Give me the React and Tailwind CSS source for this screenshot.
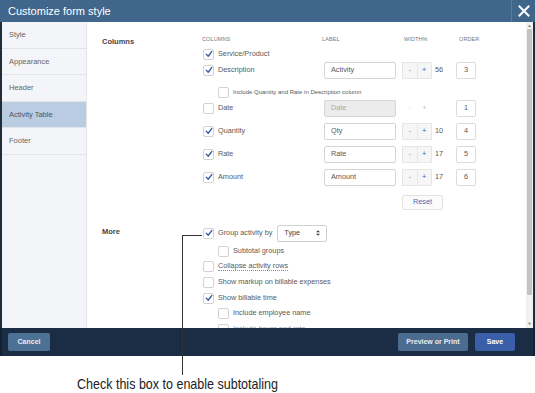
import React from 'react'

const Check = ({ checked, className = '' }) => (
  <span className={`flex h-[11px] w-[11px] shrink-0 items-center justify-center rounded-[2px] border border-[#d2d2d2] bg-white ${className}`}>
    {checked && (
      <svg viewBox="0 0 10 10" className="h-[8px] w-[8px]">
        <path d="M1.5 5.2 L4 7.8 L8.6 1.8" fill="none" stroke="#2f55a4" strokeWidth="1.6" strokeLinecap="round" strokeLinejoin="round" />
      </svg>
    )}
  </span>
)

const sideItems = ['Style', 'Appearance', 'Header', 'Activity Table', 'Footer']

const rows = [
  { name: 'Description', checked: true, label: 'Activity', width: '56', order: '3', mt: 'mt-0' },
  null,
  { name: 'Date', checked: false, label: 'Date', width: '', order: '1', mt: 'mt-0', disabled: true },
  { name: 'Quantity', checked: true, label: 'Qty', width: '10', order: '4', mt: 'mt-[5px]' },
  { name: 'Rate', checked: true, label: 'Rate', width: '17', order: '5', mt: 'mt-[5px]' },
  { name: 'Amount', checked: true, label: 'Amount', width: '17', order: '6', mt: 'mt-[5px]' },
]

function ColumnRow({ r }) {
  return (
    <div className={`flex h-[18px] items-center ${r.mt}`}>
      <div className="flex w-[122px] items-center gap-[4px] pl-[1px]">
        <Check checked={r.checked} />
        <span>{r.name}</span>
      </div>
      <div className="w-[78px]">
        <div className={`flex h-[17px] w-[72px] items-center rounded-[2px] border border-[#d4d4d4] pl-[6px] ${r.disabled ? 'bg-[#ececec] text-[#aaa]' : 'bg-white'}`}>
          {r.label}
        </div>
      </div>
      <div className="flex w-[54px] items-center">
        <div className={`flex h-[17px] w-[30px] ${r.disabled ? 'opacity-40' : 'border border-[#e6e6e6] bg-[#f6f6f6]'}`}>
          <span className="flex flex-1 items-center justify-center text-[#999]">-</span>
          <span className={`flex flex-1 items-center justify-center text-[#3a63b0] ${r.disabled ? '' : 'border-l border-[#e6e6e6]'}`}>+</span>
        </div>
        <span className="ml-[3px]">{r.width}</span>
      </div>
      <div className="flex h-[17px] w-[20px] items-center justify-center rounded-[2px] border border-[#dcdcdc] bg-white">{r.order}</div>
    </div>
  )
}

function MoreRow({ checked, indent, children, mt }) {
  return (
    <div className={`flex h-[14px] items-center gap-[4px] ${indent ? 'pl-[16px]' : 'pl-[1px]'} ${mt}`}>
      <Check checked={checked} />
      {children}
    </div>
  )
}

export default function App() {
  return (
    <div className="relative h-[393px] w-[535px] overflow-hidden bg-white font-['Liberation_Sans',Arial,sans-serif] text-[7.3px] text-[#5a5a5a]">
      {/* dialog */}
      <div className="flex h-[356px] flex-col">
        {/* title bar */}
        <div className="flex h-[22px] items-stretch bg-[#41668b]">
          <div className="flex flex-1 items-center pl-[8px] text-[11px] text-white">Customize form style</div>
          <div className="flex w-[24px] items-center justify-center border-l border-[#5a7da0]">
            <svg viewBox="0 0 12 12" className="h-[12px] w-[12px]">
              <path d="M1.5 1.5 L10.5 10.5 M10.5 1.5 L1.5 10.5" stroke="white" strokeWidth="2" strokeLinecap="square" />
            </svg>
          </div>
        </div>

        {/* body */}
        <div className="flex h-[306px] border-x-2 border-[#222d3a]">
          {/* sidebar */}
          <div className="w-[85px] shrink-0 border-r border-[#e3e5ea] bg-[#f4f5f8]">
            {sideItems.map((s) => (
              <div
                key={s}
                className={`flex h-[26.5px] items-center border-b border-[#e2e4e8] pl-[7px] text-[7.5px] ${s === 'Activity Table' ? 'bg-[#b9cce1] text-[#4d5560]' : 'text-[#666]'}`}
              >
                {s}
              </div>
            ))}
          </div>

          {/* main */}
          <div className="relative flex-1 overflow-hidden bg-white">
            <div className="flex pl-[15px] pt-[12px]">
              <div className="w-[100px] pt-[2px] text-[7.5px] font-bold text-[#444]">Columns</div>
              <div className="flex flex-col">
                <div className="flex h-[10px] items-center text-[5.5px] uppercase tracking-[0.02em] text-[#777]">
                  <span className="w-[120px]">Columns</span>
                  <span className="w-[82px]">Label</span>
                  <span className="w-[55px]">Width%</span>
                  <span>Order</span>
                </div>
                <div className="mt-[3px] flex h-[14px] items-center gap-[4px] pl-[1px]">
                  <Check checked />
                  <span>Service/Product</span>
                </div>
                <ColumnRow r={rows[0]} />
                <div className="mt-[6px] flex h-[14px] items-center gap-[4px] pl-[16px] text-[6px]">
                  <Check />
                  <span>Include Quantity and Rate in Description column</span>
                </div>
                {rows.slice(2).map((r) => (
                  <ColumnRow key={r.name} r={r} />
                ))}
                <div className="ml-[200px] mt-[9px] flex h-[15px] w-[41px] items-center justify-center rounded-[2px] border border-[#e2e2e2] bg-[#fbfbfb] text-[#4a6db3]">
                  Reset
                </div>
              </div>
            </div>

            <div className="mt-[14px] flex pl-[15px]">
              <div className="w-[100px] pt-[2px] text-[7.5px] font-bold text-[#444]">More</div>
              <div className="flex flex-col">
                <div className="flex h-[18px] items-center gap-[4px] pl-[1px]">
                  <Check checked />
                  <span>Group activity by</span>
                  <div className="ml-[1px] flex h-[17px] w-[50px] items-center justify-between rounded-[2px] border border-[#d0d0d0] bg-white pl-[6px] pr-[6px] text-[#444]">
                    <span>Type</span>
                    <svg viewBox="0 0 6 8" className="h-[6px] w-[4px]">
                      <path d="M3 0 L6 3 L0 3 Z M3 8 L6 5 L0 5 Z" fill="#444" />
                    </svg>
                  </div>
                </div>
                <MoreRow indent mt="mt-[2px]">
                  <span>Subtotal groups</span>
                </MoreRow>
                <MoreRow mt="mt-[1px]">
                  <span className="border-b border-dotted border-[#888] leading-[9px]">Collapse activity rows</span>
                </MoreRow>
                <MoreRow mt="mt-[2px]">
                  <span>Show markup on billable expenses</span>
                </MoreRow>
                <MoreRow checked mt="mt-[2px]">
                  <span>Show billable time</span>
                </MoreRow>
                <MoreRow indent mt="mt-[1px]">
                  <span>Include employee name</span>
                </MoreRow>
                <MoreRow indent mt="mt-[2px]">
                  <span className="text-[#999]">Include hours and rate</span>
                </MoreRow>
              </div>
            </div>
          </div>

          {/* scrollbar */}
          <div className="flex w-[7px] shrink-0 flex-col items-center bg-[#f1f1f1]">
            <span className="mt-[2px] text-[4px] leading-[4px] text-[#666]">▲</span>
            <div className="mt-[1px] h-[266px] w-[5px] rounded-[1px] bg-[#c3c3c3]" />
            <span className="mt-auto mb-[2px] text-[4px] leading-[4px] text-[#666]">▼</span>
          </div>
        </div>

        {/* footer */}
        <div className="flex h-[28px] items-center border-x-2 border-[#15202e] bg-[#1b2d44] px-[6px]">
          <button className="h-[18px] w-[42px] rounded-[2px] bg-[#4d7195] text-[7px] font-bold text-[#e6edf4]">Cancel</button>
          <button className="ml-auto h-[18px] w-[70px] rounded-[2px] bg-[#4b6c8f] text-[7px] font-bold text-[#e6edf4]">Preview or Print</button>
          <button className="ml-[7px] mr-[12px] h-[18px] w-[40px] rounded-[2px] bg-[#3a5ea8] text-[7px] font-bold text-white">Save</button>
        </div>
      </div>

      {/* caption */}
      <div className="pl-[77px] pt-[20px]">
        <span className="inline-block origin-left scale-x-[0.834] whitespace-nowrap font-['Liberation_Sans',Arial,sans-serif] text-[15px] leading-[16px] text-[#222]">
          Check this box to enable subtotaling
        </span>
      </div>

      {/* callout line */}
      <div className="absolute left-[182px] top-[235px] h-[140px] w-px bg-[#333]" />
      <div className="absolute left-[182px] top-[235px] h-px w-[20px] bg-[#333]" />
    </div>
  )
}
